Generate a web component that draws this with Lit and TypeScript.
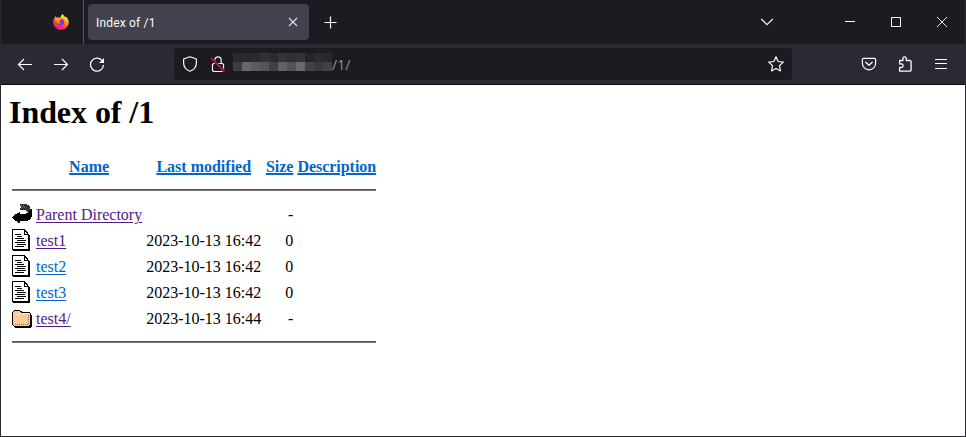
import { LitElement, html, css, svg } from "lit";
import { customElement } from "lit/decorators.js";

interface Entry {
  icon: "back" | "text" | "folder";
  name: string;
  visited: boolean;
  modified: string;
  size: string;
}

const entries: Entry[] = [
  { icon: "back", name: "Parent Directory", visited: true, modified: "", size: "-" },
  { icon: "text", name: "test1", visited: true, modified: "2023-10-13 16:42", size: "0" },
  { icon: "text", name: "test2", visited: false, modified: "2023-10-13 16:42", size: "0" },
  { icon: "text", name: "test3", visited: false, modified: "2023-10-13 16:42", size: "0" },
  { icon: "folder", name: "test4/", visited: true, modified: "2023-10-13 16:44", size: "-" },
];

const fileIcons = {
  back: svg`
    <path fill="#333" d="M8 1h5l3 1 2 2 1 3-2 3-1-1-3-2H8l1-3z"/>
    <path stroke="#777" stroke-dasharray="1 1" d="M9 2.5h4M10 4.5h4"/>
    <path fill="#000" d="M19 6h1v7l-1 2-2 2-3 1H8v2H7l-3-2-4-3v-1l4-3 4-2v2h4l3-1 3-3z"/>`,
  text: svg`
    <path fill="#fff" stroke="#000" d="M.5.5h12l4 5v15H.5z"/>
    <path fill="none" stroke="#000" d="M12.5.5v5h4M17.5 6v15.5H1"/>
    <path stroke="#000" d="M3 5.5h6M5 7.5h5M3 9.5h9M5 11.5h9M3 13.5h10M5 15.5h9M3 17.5h9"/>`,
  folder: svg`
    <path fill="#000" d="M3 4h6l2 2h8v2h1v11l-2 2H3l-1-1z"/>
    <path fill="#fc9" stroke="#000" d="M.5 5.5l2-2h5l2 2h8l1 1v11l-1 2h-15l-2-2z"/>
    <path fill="none" stroke="#ffe5cc" d="M2 7.5h6l2-1h7"/>
    <path fill="none" stroke="#963" stroke-dasharray="1 1" d="M3 17.5h14M16.5 8v9"/>`,
};

/* Brightness of the blocks that hide the host name: nine pixels each. */
const mosaic = [
  ["#29282d", "#29282d", "#2b2a2f", "#323136", "#2c2b30", "#35343a", "#302f34", "#34333a", "#242329", "#2c2b30", "#29282d"],
  ["#3d3c42", "#68676c", "#5c5b60", "#555459", "#414046", "#626166", "#535257", "#69686d", "#424147", "#3a393f", "#414046"],
];

@customElement("app-root")
export class AppRoot extends LitElement {
  static styles = css`
    :host {
      display: flex;
      flex-direction: column;
      box-sizing: border-box;
      width: 966px;
      height: 437px;
      border: solid #2b2a2e;
      border-width: 0 1px 1px;
      background: #fff;
      overflow: hidden;
    }
    svg { display: block; flex: none; fill: none; }
    .tabs {
      display: flex;
      align-items: center;
      height: 44px;
      background: #1c1b22;
      color: #fbfbfe;
      flex: none;
    }
    .firefox { margin-left: 52px; }
    .divider { width: 1px; height: 44px; margin-left: 14px; background: #56555c; }
    .tab {
      display: flex;
      align-items: center;
      justify-content: space-between;
      box-sizing: border-box;
      width: 221px;
      height: 36px;
      margin-left: 4px;
      padding: 0 11px 0 8px;
      border-radius: 4px;
      background: #42414d;
      font: 12px Roboto, "Open Sans", sans-serif;
    }
    .title { padding-top: 1px; letter-spacing: 0.18px; }
    .plus { margin-left: 15px; }
    .chevron { margin-left: auto; }
    .minimize { margin-left: 70px; }
    .maximize { margin-left: 34px; }
    .close { margin: 0 17px 0 34px; }
    .nav {
      display: flex;
      align-items: center;
      box-sizing: border-box;
      height: 41px;
      flex: none;
      border-bottom: 1px solid #0c0c0d;
      background: #2b2a33;
    }
    .nav-buttons { display: flex; gap: 20px; margin-left: 16px; }
    .address {
      display: flex;
      align-items: center;
      box-sizing: border-box;
      width: 618px;
      height: 32px;
      margin-left: 69px;
      padding: 0 8px;
      border-radius: 4px;
      background: #1c1b22;
    }
    .lock { margin-left: 12px; }
    .host { margin: -4px 0 0 7px; }
    .path { padding-top: 1px; color: #96959b; font: 14px "Open Sans", sans-serif; }
    .star { margin-left: auto; }
    .actions { display: flex; gap: 20px; margin-left: 69px; }
    .page {
      flex: 1;
      padding: 9px 8px 0;
      color: #000;
      font: 16px/18px "Liberation Serif", "Times New Roman", serif;
    }
    h1 { margin: 0 0 21px; height: 37px; font-size: 32px; line-height: 37px; letter-spacing: -0.06px; }
    table { border-spacing: 2px; border-collapse: separate; }
    th, td { padding: 1px; white-space: nowrap; }
    tr.row { height: 24px; }
    .row .name, .row .modified, .row .size, .row .description { padding: 3px 1px 1px; }
    .icon { width: 20px; height: 22px; }
    .name { width: 106px; text-align: left; }
    .modified { width: 115px; text-align: right; }
    .size { width: 28px; text-align: right; }
    .description { width: 79px; }
    th.name, th.modified { text-align: center; }
    th.size, th.description { letter-spacing: -0.04px; }
    hr { height: 2px; margin: 8px 0; border: 0; background: linear-gradient(#555 50%, #777 50%); }
    a { color: #0066cc; text-decoration: underline; text-underline-offset: 2px; }
    th a { text-decoration-thickness: 2px; text-underline-offset: 1px; }
    a.visited { color: #551a8b; }
  `;

  private fileIcon(kind: Entry["icon"]) {
    return html`<svg width="20" height="22" viewBox="0 0 20 22" shape-rendering="crispEdges">${fileIcons[kind]}</svg>`;
  }

  render() {
    return html`
      <div class="tabs">
        <svg class="firefox" width="16" height="16" viewBox="0 0 16 16">
          <defs>
            <linearGradient id="flame" x1=".8" y1="0" x2=".25" y2="1">
              <stop offset=".1" stop-color="#fff44f"/><stop offset=".4" stop-color="#ff980e"/>
              <stop offset=".68" stop-color="#ff3647"/><stop offset="1" stop-color="#e31587"/>
            </linearGradient>
          </defs>
          <path fill="url(#flame)" d="M10 0c.3 1.4 1 2 1.8 2.8L13.3 3c1.6 1.7 2.5 3.4 2.5 5.4A7.8 7.5 0 0 1 .2 8.4C.2 6.2.9 4.3 2 3l.4-1 1 1.4L5 3.2c.8 0 1.7.3 2.2.7C7.3 2.3 8.4.8 10 0z"/>
          <circle cx="8" cy="8" r="3.2" fill="#8037df"/>
          <path fill="#ffa51e" d="M2.2 4.6c1.5-1.1 3-1 4.1.1l2 .7c-.2.9-1.3 1-1.9 1.3-.5 1.3.1 2.4 1.1 3-1.7.4-3.5-.7-3.8-2.4z"/>
        </svg>
        <div class="divider"></div>
        <div class="tab">
          <span class="title">Index of /1</span>
          <svg width="10" height="10" viewBox="0 0 10 10" stroke="#dddde2" stroke-width="1.1"><path d="M1 1l8 8M9 1L1 9"/></svg>
        </div>
        <svg class="plus" width="13" height="13" viewBox="0 0 13 13" stroke="#fbfbfe" stroke-width="1.2"><path d="M6.5.5v12M.5 6.5h12"/></svg>
        <svg class="chevron" width="14" height="8" viewBox="0 0 14 8" stroke="#e8e8ec" stroke-width="1.3"><path d="M1.2 1L7 6.7 12.8 1"/></svg>
        <svg class="minimize" width="12" height="12" viewBox="0 0 12 12" stroke="#fff"><path d="M1 5.5h10"/></svg>
        <svg class="maximize" width="12" height="12" viewBox="0 0 12 12" stroke="#fff"><path d="M1.5 1.5h9v9h-9z"/></svg>
        <svg class="close" width="12" height="12" viewBox="0 0 12 12" stroke="#fff" stroke-width=".9"><path d="M1 1l10 10M11 1L1 11"/></svg>
      </div>
      <div class="nav">
        <div class="nav-buttons">
          <svg width="16" height="16" viewBox="0 0 16 16" stroke="#fbfbfe" stroke-width="1.2"><path d="M15 8.5H1.5M7 3L1.5 8.5 7 14"/></svg>
          <svg width="16" height="16" viewBox="0 0 16 16" stroke="#fbfbfe" stroke-width="1.2"><path d="M1 8.5h13.5M9 3l5.5 5.5L9 14"/></svg>
          <svg width="16" height="16" viewBox="0 0 16 16" stroke="#fbfbfe" stroke-width="1.3"><path d="M12.8 4.2a6.5 6.5 0 1 0 1.7 4.8"/><path fill="#fbfbfe" stroke="none" d="M15 2v5H10z"/></svg>
        </div>
        <div class="address">
          <svg width="16" height="16" viewBox="0 0 16 16" stroke="#fbfbfe" stroke-width="1.2" stroke-linejoin="round"><path d="M8 .7L1.6 3v3.7c0 3.9 2.6 7.2 6.4 8.6 3.8-1.4 6.4-4.7 6.4-8.6V3z"/></svg>
          <svg class="lock" width="16" height="16" viewBox="0 0 16 16" stroke="#f3f3f6" stroke-width="1.2"><path d="M4.8 7V4a3.2 3.2 0 0 1 6.4 0v3M3.5 7.5h9l1 1v6l-1 1h-9l-1-1v-6z"/><path stroke="#1c1b22" stroke-width="2.6" d="M1 2l13.5 13.5"/><path stroke="#e2123f" stroke-width="1.5" d="M1 2l13.5 13.5"/></svg>
          <svg class="host" width="99" height="18" viewBox="0 0 99 18" shape-rendering="crispEdges">
            ${mosaic.map((row, y) => row.map((fill, x) => svg`<rect x=${x * 9} y=${y * 9} width="9" height="9" fill=${fill}/>`))}
          </svg>
          <span class="path">/1/</span>
          <svg class="star" width="16" height="16" viewBox="0 0 16 16" stroke="#fbfbfe" stroke-width="1.2" stroke-linejoin="round"><path d="M8 .8l2.1 4.7 5.2.6-3.8 3.5 1 5.3L8 12.4l-4.5 2.5 1-5.3L.7 6.1l5.2-.6z"/></svg>
        </div>
        <div class="actions">
          <svg width="16" height="16" viewBox="0 0 16 16" stroke="#fbfbfe" stroke-width="1.2" stroke-linecap="round" stroke-linejoin="round"><path d="M2.6 2.3h10.8a1.2 1.2 0 0 1 1.2 1.2v3.7a6.6 6.6 0 0 1-13.2 0V3.5a1.2 1.2 0 0 1 1.2-1.2zM4.8 6.2L8 9.3l3.2-3.1"/></svg>
          <svg width="16" height="16" viewBox="0 0 16 16" stroke="#fbfbfe" stroke-width="1.3" stroke-linejoin="round"><path d="M2.6 7V4.5h3.3V2.6a1.7 1.7 0 0 1 3.4 0v1.9h3.9l.9.9v8.9l-.9.9H2.6v-3.7h1.7a1.7 1.7 0 0 0 0-3.6H1.9"/></svg>
          <svg width="16" height="16" viewBox="0 0 16 16" stroke="#fbfbfe" stroke-width="1.2" stroke-linecap="round"><path d="M2.5 3.5h11M2.5 7.500h11M2.5 12.5h11"/></svg>
        </div>
      </div>
      <div class="page">
        <h1>Index of /1</h1>
        <table>
          <tr class="row">
            <th><div class="icon"></div></th>
            <th class="name"><a>Name</a></th>
            <th class="modified"><a>Last modified</a></th>
            <th class="size"><a>Size</a></th>
            <th class="description"><a>Description</a></th>
          </tr>
          <tr><th colspan="5"><hr /></th></tr>
          ${entries.map((e) => html`
            <tr class="row">
              <td>${this.fileIcon(e.icon)}</td>
              <td class="name"><a class=${e.visited ? "visited" : ""}>${e.name}</a></td>
              <td class="modified">${e.modified}</td>
              <td class="size">${e.size}</td>
              <td></td>
            </tr>`)}
          <tr><th colspan="5"><hr /></th></tr>
        </table>
      </div>
    `;
  }
}
